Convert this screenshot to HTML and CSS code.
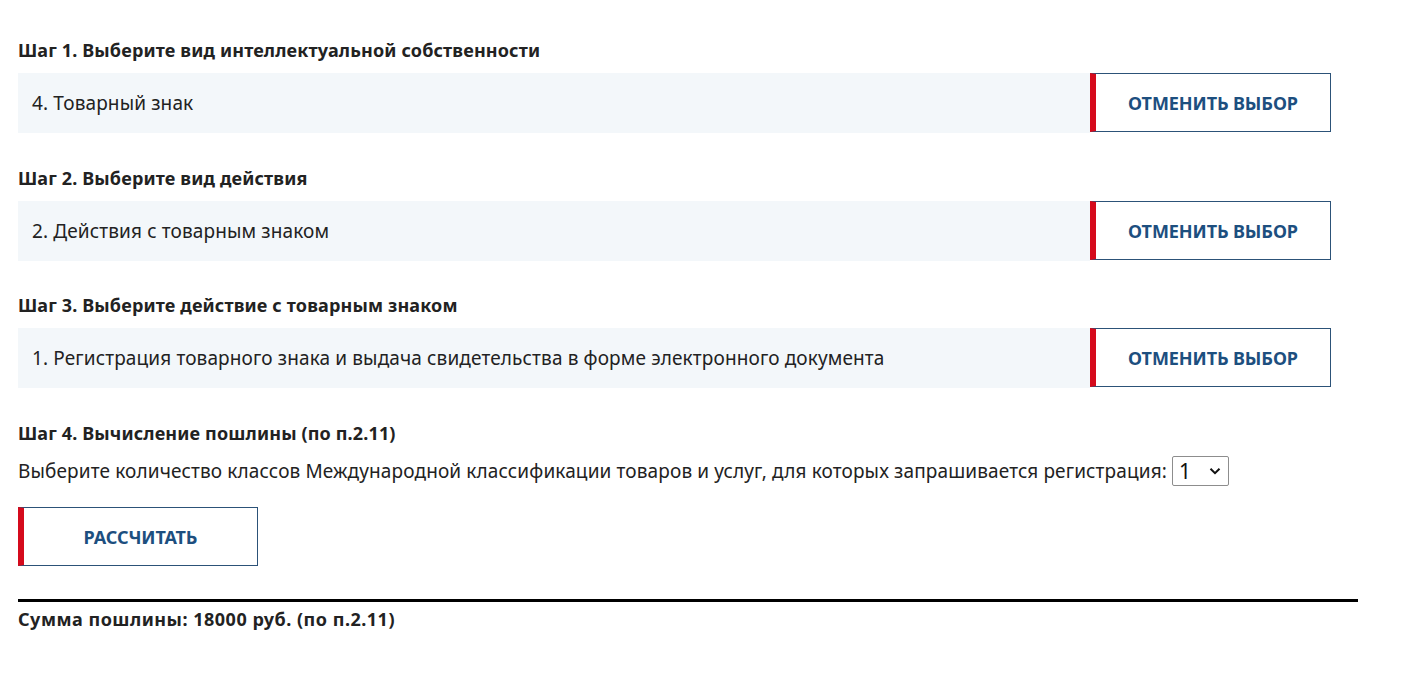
FILE: index.html
```html
<!DOCTYPE html>
<html lang="ru">
<head>
<meta charset="utf-8">
<link rel="stylesheet" href="styles.css">
</head>
<body>
<div class="calc">
  <div class="step">
    <h3 class="step-title">Шаг 1. Выберите вид интеллектуальной собственности</h3>
    <div class="choice">
      <div class="choice-text">4. Товарный знак</div>
      <button class="btn">ОТМЕНИТЬ ВЫБОР</button>
    </div>
  </div>
  <div class="step">
    <h3 class="step-title">Шаг 2. Выберите вид действия</h3>
    <div class="choice">
      <div class="choice-text">2. Действия с товарным знаком</div>
      <button class="btn">ОТМЕНИТЬ ВЫБОР</button>
    </div>
  </div>
  <div class="step">
    <h3 class="step-title">Шаг 3. Выберите действие с товарным знаком</h3>
    <div class="choice">
      <div class="choice-text">1. Регистрация товарного знака и выдача свидетельства в форме электронного документа</div>
      <button class="btn">ОТМЕНИТЬ ВЫБОР</button>
    </div>
  </div>
  <div class="step">
    <h3 class="step-title">Шаг 4. Вычисление пошлины (по п.2.11)</h3>
    <div class="classes">Выберите количество классов Международной классификации товаров и услуг, для которых запрашивается регистрация: <span class="select"><span class="select-val">1</span><svg class="chev" viewBox="0 0 12 8" width="12" height="8"><path d="M1.5 1.8 L6 6.2 L10.5 1.8" fill="none" stroke="#111" stroke-width="2"/></svg></span></div>
    <button class="btn btn-calc">РАССЧИТАТЬ</button>
  </div>
  <div class="result">Сумма пошлины: 18000 руб. (по п.2.11)</div>
</div>
</body>
</html>
```
FILE: styles.css
```css
body {
  margin: 0;
  background: #fff;
  font-family: "Noto Sans", "Open Sans", sans-serif;
  color: #222;
}
.calc {
  width: 1340px;
  padding: 38px 0 0 18px;
}
.step-title {
  margin: 0 0 11px;
  font-size: 18px;
  line-height: 24px;
  font-weight: 700;
  color: #222;
  letter-spacing: 0.15px;
}
.step + .step .step-title {
  margin-top: 33px;
}
.step:nth-child(3) .step-title {
  margin-top: 32px;
}
.choice {
  display: flex;
  width: 1313px;
  height: 60px;
}
.choice-text {
  flex: 1;
  background: #f3f7fa;
  display: flex;
  align-items: center;
  padding-left: 14px;
  font-size: 19px;
  letter-spacing: 0.13px;
  color: #222;
}
.btn {
  box-sizing: border-box;
  width: 241px;
  height: 59px;
  background: #fff;
  border: 1px solid #2c5278;
  border-left: 6px solid #d50a1c;
  font-family: inherit;
  font-size: 18px;
  font-weight: 700;
  color: #1d4f7f;
  letter-spacing: -0.1px;
  padding: 0;
}
.classes {
  font-size: 19px;
  line-height: 30px;
  letter-spacing: 0.13px;
  margin-top: 9px;
  display: flex;
  align-items: center;
  white-space: nowrap;
}
.select {
  display: inline-flex;
  align-items: center;
  justify-content: space-between;
  box-sizing: border-box;
  width: 57px;
  height: 30px;
  margin-left: 5px;
  border: 1px solid #8d8d8d;
  border-radius: 2px;
  padding: 0 7px 0 6px;
  font-size: 21px;
  color: #111;
}
.btn-calc {
  display: block;
  margin-top: 21px;
  width: 240px;
  height: 59px;
}
.result {
  margin-top: 33px;
  border-top: 3px solid #000;
  width: 1340px;
  padding-top: 5px;
  font-size: 18px;
  line-height: 24px;
  font-weight: 700;
  letter-spacing: 0.5px;
}
```
